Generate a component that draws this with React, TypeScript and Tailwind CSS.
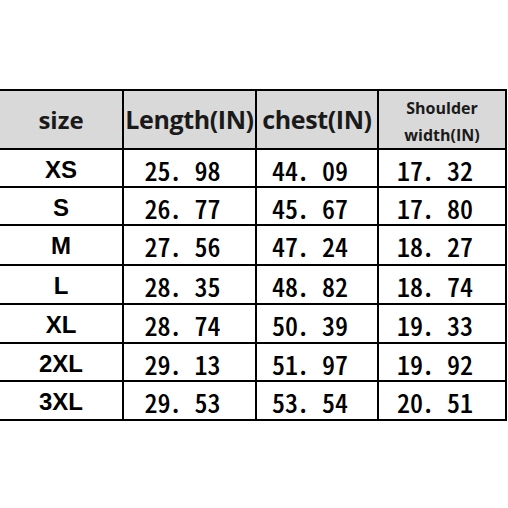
const rows = [
  { size: "XS", len: "25. 98", chest: "44. 09", sh: "17. 32", h: "h-[38px]" },
  { size: "S", len: "26. 77", chest: "45. 67", sh: "17. 80", h: "h-[38px]" },
  { size: "M", len: "27. 56", chest: "47. 24", sh: "18. 27", h: "h-[40px]" },
  { size: "L", len: "28. 35", chest: "48. 82", sh: "18. 74", h: "h-[39px]" },
  { size: "XL", len: "28. 74", chest: "50. 39", sh: "19. 33", h: "h-[39px]" },
  { size: "2XL", len: "29. 13", chest: "51. 97", sh: "19. 92", h: "h-[38px]" },
  { size: "3XL", len: "29. 53", chest: "53. 54", sh: "20. 51", h: "h-[39px]" },
];

const cols = "grid grid-cols-[122px_133px_122px_128px]";

function Num({ value }: { value: string }) {
  const [a, b] = value.split(". ");
  return (
    <div className="flex items-center justify-center border-l-2 border-black pr-[14px] text-[26px] font-medium text-black [font-family:'Noto_Sans_CJK_SC',sans-serif]">
      <span className="[font-feature-settings:'hwid']">{a}</span>
      <span className="ml-[1px] mr-[15px]">.</span>
      <span className="[font-feature-settings:'hwid']">{b}</span>
    </div>
  );
}

export default function App() {
  return (
    <div className="h-[508px] w-[508px] bg-white pt-[89px]">
      <div className="w-[507px] border-y-2 border-r-2 border-black">
        <div
          className={`${cols} h-[57px] bg-[#d9d9d9] font-bold text-[#1a1a1a] [font-family:'Open_Sans',sans-serif]`}
        >
          <div className="flex items-center justify-center text-[24px]">size</div>
          <div className="flex items-center justify-center border-l-2 border-black text-[25px] tracking-[-0.4px]">
            Length(IN)
          </div>
          <div className="flex items-center justify-center border-l-2 border-black text-[25px] tracking-[-0.4px]">
            chest(IN)
          </div>
          <div className="flex flex-col items-center justify-center border-l-2 border-black pt-[4px] text-[16px] leading-[27px]">
            <span>Shoulder</span>
            <span>width(IN)</span>
          </div>
        </div>
        {rows.map((r) => (
          <div key={r.size} className={`${cols} ${r.h} border-t-2 border-black`}>
            <div className="flex items-center justify-center text-[24px] font-bold text-black [font-family:'Liberation_Sans',sans-serif]">
              {r.size}
            </div>
            <Num value={r.len} />
            <Num value={r.chest} />
            <Num value={r.sh} />
          </div>
        ))}
      </div>
    </div>
  );
}
